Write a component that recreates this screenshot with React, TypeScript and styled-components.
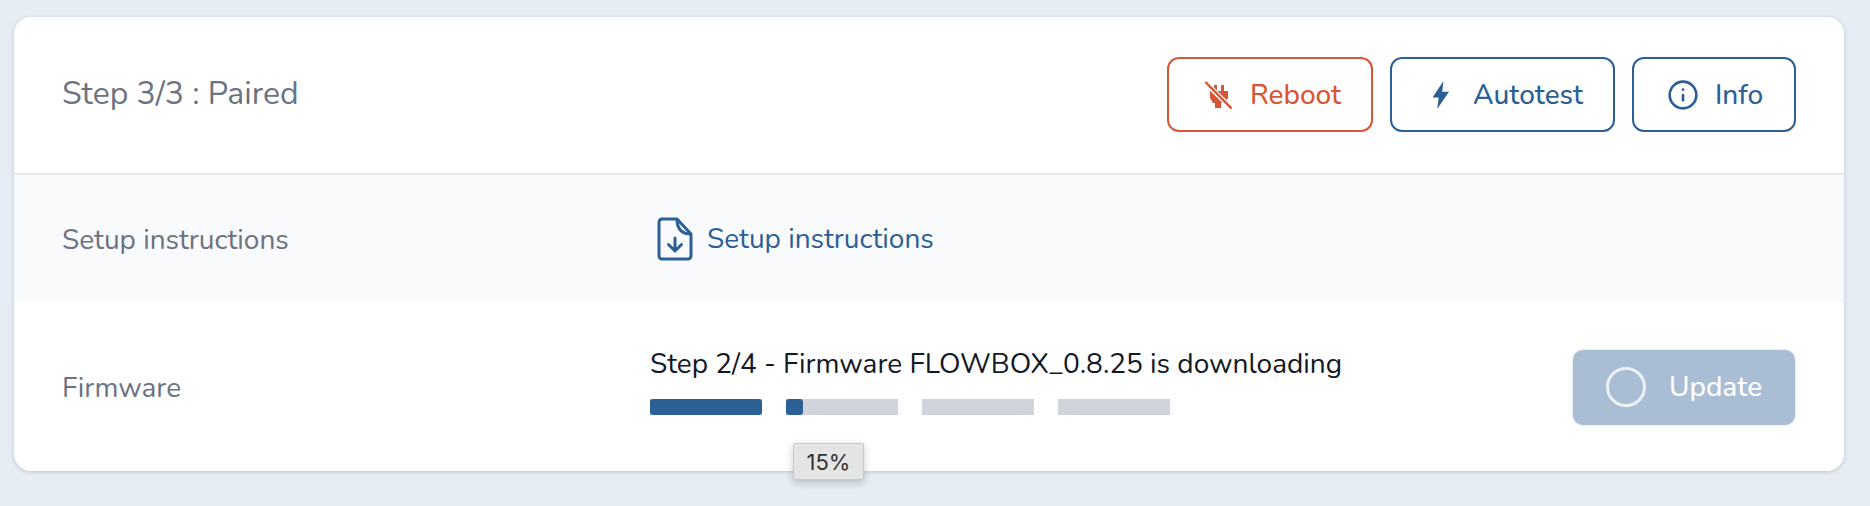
import React from "react";
import styled, { createGlobalStyle } from "styled-components";
import { Info } from "lucide-react";

const GlobalStyle = createGlobalStyle`
  html, body {
    margin: 0;
    height: 100%;
    background: #e6edf4;
    font-family: "Nunito", "Lato", "Open Sans", sans-serif;
  }
`;

const Page = styled.div`
  padding: 17px 26px 0 14px;
`;

const Card = styled.div`
  background: #fff;
  border-radius: 17px;
  box-shadow: 0 1px 4px rgba(60, 70, 90, 0.22);
`;

const Header = styled.div`
  height: 158px;
  display: flex;
  align-items: center;
  justify-content: space-between;
  padding: 0 48px 1px;
  box-sizing: border-box;
  border-bottom: 2px solid #e5e7eb;
`;

const Title = styled.div`
  font-size: 32px;
  color: #6b7280;
  padding-bottom: 2px;
`;

const Actions = styled.div`
  display: flex;
  gap: 17px;
`;

const ActionButton = styled.button<{ $danger?: boolean; $width: number }>`
  width: ${(p) => p.$width}px;
  height: 75px;
  display: flex;
  align-items: center;
  gap: 18px;
  padding: 0 0 0 35px;
  box-sizing: border-box;
  background: #fff;
  border: 2px solid ${(p) => (p.$danger ? "#d95536" : "#2c5f96")};
  border-radius: 12px;
  color: ${(p) => (p.$danger ? "#d95536" : "#2c5f96")};
  font-family: inherit;
  font-size: 28px;
  font-weight: 500;
`;

const IconBox = styled.span`
  width: 28px;
  height: 28px;
  display: flex;
  align-items: center;
  justify-content: center;

  svg {
    flex-shrink: 0;
  }
`;

const Row = styled.div<{ $shaded?: boolean; $height: number }>`
  height: ${(p) => p.$height}px;
  display: grid;
  grid-template-columns: 588px 1fr auto;
  align-items: center;
  padding: 0 48px;
  background: ${(p) => (p.$shaded ? "#f9fafb" : "transparent")};
`;

const Label = styled.div`
  font-size: 28px;
  color: #6b7280;
  padding-top: 2px;
`;

const DocLink = styled.a`
  display: flex;
  align-items: center;
  gap: 14px;
  margin-left: 7px;
  color: #2c5f96;
  font-size: 28px;
`;

const Firmware = styled.div`
  display: flex;
  flex-direction: column;
  gap: 18px;
  margin-top: -12px;
`;

const StepText = styled.div`
  font-size: 28px;
  color: #111827;
  line-height: 34px;
`;

const Bars = styled.div`
  display: flex;
  gap: 24px;
  position: relative;
`;

const Bar = styled.div`
  width: 112px;
  height: 16px;
  background: #d1d5db;
  overflow: hidden;
`;

const BarFill = styled.div`
  height: 100%;
  background: #2c5f96;
  border-radius: 3px;
`;

const Tooltip = styled.div`
  position: absolute;
  left: 143px;
  top: 44px;
  width: 71px;
  height: 37px;
  box-sizing: border-box;
  display: flex;
  align-items: center;
  justify-content: center;
  background: #e4e4e4;
  border: 1px solid #c9c9c9;
  border-radius: 2px;
  box-shadow: 0 3px 9px rgba(0, 0, 0, 0.2);
  color: #333;
  font-family: "Inter", "Liberation Sans", sans-serif;
  font-size: 22px;
`;

const UpdateButton = styled.button`
  width: 224px;
  height: 77px;
  display: flex;
  align-items: center;
  gap: 23px;
  padding: 0 0 0 33px;
  box-sizing: border-box;
  background: #a9bed5;
  border: 1px solid #eceff4;
  border-radius: 11px;
  color: #fff;
  font-family: inherit;
  font-size: 28px;
  font-weight: 500;
`;

const Spinner = styled.span`
  width: 40px;
  height: 40px;
  box-sizing: border-box;
  border: 3px solid #edf0f4;
  border-radius: 50%;
`;

const PlugOffIcon = () => (
  <svg width="28" height="28" viewBox="0 0 28 28" fill="currentColor">
    <rect x="10" y="4" width="3" height="6" />
    <rect x="17" y="4" width="3" height="6" />
    <path d="M6 10h18v7l-4 5h-3v5h-6v-5h-2l-3-5z" />
    <path d="M1.500 1.500 27 27" stroke="#fff" strokeWidth="5" />
    <path d="M1.500 1 27.500 27.500" stroke="currentColor" strokeWidth="2.4" />
  </svg>
);

const BoltIcon = () => (
  <svg width="18" height="28" viewBox="0 0 18 28" fill="currentColor">
    <path d="M11.500 0 .5 16.500h6.200L5.200 28 17 10.800h-6.800z" />
  </svg>
);

const FileDownIcon = () => (
  <svg width="36" height="44" viewBox="0 0 36 44" fill="none" stroke="currentColor" strokeWidth="3">
    <path d="M5 2h15l14 15v22a3 3 0 0 1-3 3H5a3 3 0 0 1-3-3V5a3 3 0 0 1 3-3z" strokeLinejoin="round" />
    <path d="M20 2c0 8 3 15 14 15" />
    <path d="M18 21v13M11.500 27.500l6.500 6.500 6.500-6.500" strokeLinecap="round" strokeLinejoin="round" />
  </svg>
);

const App = () => {
  return (
    <Page>
      <GlobalStyle />
      <Card>
        <Header>
          <Title>Step 3/3 : Paired</Title>
          <Actions>
            <ActionButton $danger $width={206}>
              <IconBox>
                <PlugOffIcon />
              </IconBox>
              Reboot
            </ActionButton>
            <ActionButton $width={225}>
              <IconBox>
                <BoltIcon />
              </IconBox>
              Autotest
            </ActionButton>
            <ActionButton $width={164}>
              <IconBox>
                <Info size={32} strokeWidth={2} />
              </IconBox>
              Info
            </ActionButton>
          </Actions>
        </Header>
        <Row $shaded $height={128}>
          <Label>Setup instructions</Label>
          <DocLink>
            <FileDownIcon />
            Setup instructions
          </DocLink>
        </Row>
        <Row $height={168}>
          <Label>Firmware</Label>
          <Firmware>
            <StepText>Step 2/4 - Firmware FLOWBOX_0.8.25 is downloading</StepText>
            <Bars>
              <Bar>
                <BarFill style={{ width: "100%" }} />
              </Bar>
              <Bar>
                <BarFill style={{ width: "15%" }} />
              </Bar>
              <Bar />
              <Bar />
              <Tooltip>15%</Tooltip>
            </Bars>
          </Firmware>
          <UpdateButton>
            <Spinner />
            Update
          </UpdateButton>
        </Row>
      </Card>
    </Page>
  );
};

export default App;
